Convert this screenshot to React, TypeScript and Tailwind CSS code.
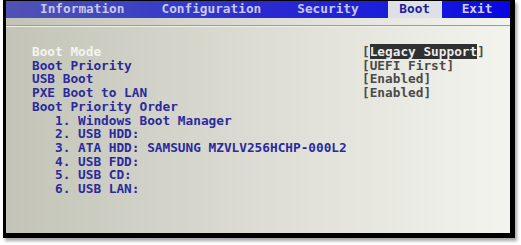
import * as React from "react";

const mono = { fontFamily: '"DejaVu Sans Mono", "Liberation Mono", monospace' };

const tabs = [
  { label: "Information", ml: "ml-[34px]" },
  { label: "Configuration", ml: "ml-[37px]" },
  { label: "Security", ml: "ml-[36px]" },
];

const rows: { label: string; value?: string; white?: boolean; highlight?: boolean }[] = [
  { label: "Boot Mode", value: "Legacy Support", white: true, highlight: true },
  { label: "Boot Priority", value: "UEFI First" },
  { label: "USB Boot", value: "Enabled" },
  { label: "PXE Boot to LAN", value: "Enabled" },
  { label: "Boot Priority Order" },
  { label: "   1. Windows Boot Manager" },
  { label: "   2. USB HDD:" },
  { label: "   3. ATA HDD: SAMSUNG MZVLV256HCHP-000L2" },
  { label: "   4. USB FDD:" },
  { label: "   5. USB CD:" },
  { label: "   6. USB LAN:" },
];

export default function App() {
  return (
    <div className="w-[521px] h-[245px] bg-white overflow-hidden" style={mono}>
      <div className="ml-[3px] w-[512px] h-[238px] border-l-[3px] border-r-[5px] border-b-[5px] border-t-[1px] border-black shadow-[2px_3px_3px_rgba(0,0,0,0.35)] flex flex-col bg-gradient-to-r from-[#c3c4b7] via-[#dcdcd4] to-[#f4f4ef]">
        {/* Menu bar */}
        <div className="h-[17px] flex items-center bg-gradient-to-r from-[#5252b4] via-[#2a2ad0] to-[#0606e2] text-[12.75px] font-bold leading-none">
          {tabs.map((t) => (
            <span key={t.label} className={`${t.ml} text-[#c8c8ec]`}>
              {t.label}
            </span>
          ))}
          <span className="ml-[29px] h-full w-[54px] flex items-center justify-center bg-[#dde1e4] text-[#1c1ca0]">
            Boot
          </span>
          <span className="ml-[20px] text-[#d0d0f0]">Exit</span>
        </div>
        <div className="h-[7px]" />
        <div className="h-px bg-[#9c9c96]" />
        <div className="h-px bg-[#f0f0ea]" />

        {/* Settings */}
        <div className="pt-[18px] pl-[26px] text-[12.75px] font-bold leading-[13.7px]">
          {rows.map((r) => (
            <div key={r.label} className="flex whitespace-pre">
              <span className={`w-[330px] ${r.white ? "text-[#f4f4f0]" : "text-[#2a2a9e]"}`}>{r.label}</span>
              {r.value && (
                <span className="text-[#4a4a48]">
                  [
                  <span className={r.highlight ? "bg-[#303030] text-[#ececec]" : ""}>{r.value}</span>]
                </span>
              )}
            </div>
          ))}
        </div>
      </div>
    </div>
  );
}
